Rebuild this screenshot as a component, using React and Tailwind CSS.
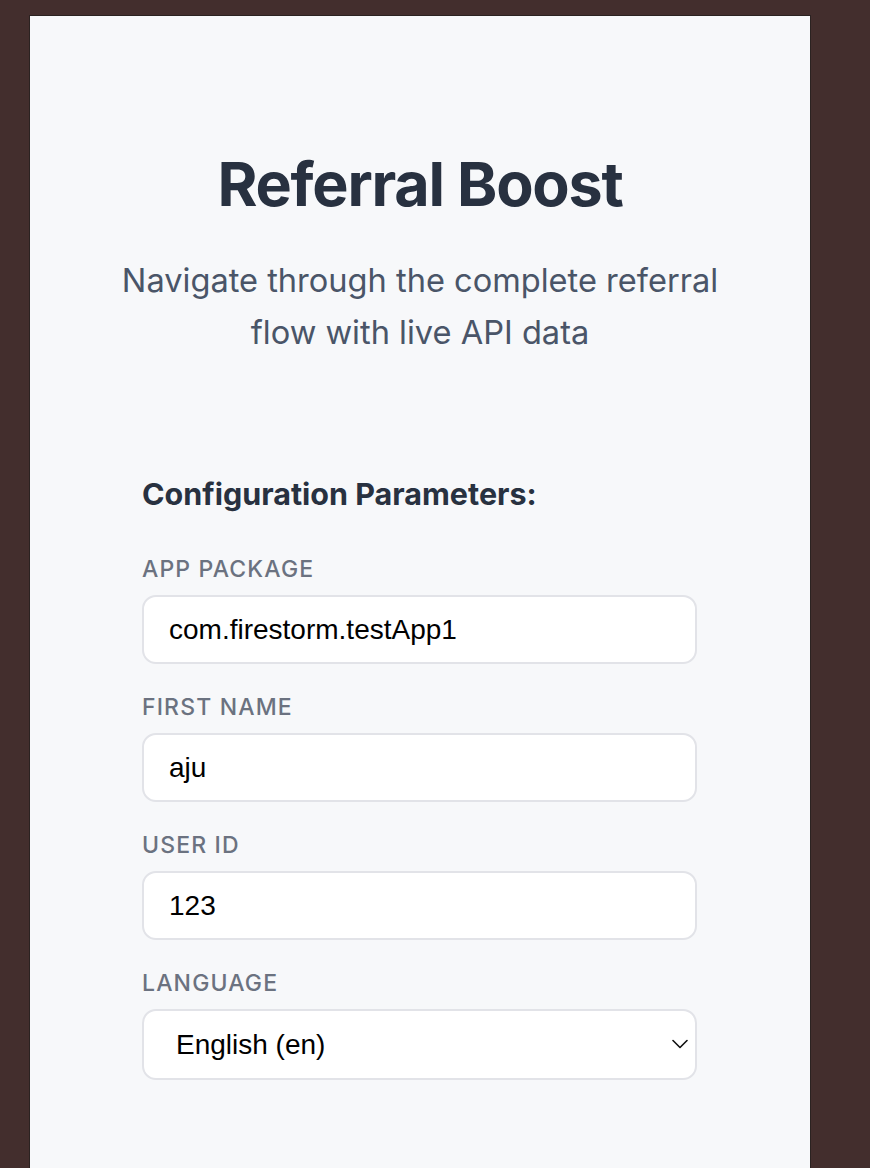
import React from 'react';

const fields = [
    { label: 'App Package', value: 'com.firestorm.testApp1' },
    { label: 'First Name', value: 'aju' },
    { label: 'User ID', value: '123' },
];

const Label = ({ children }) => (
    <label className="block text-[23px] leading-[28px] font-medium uppercase tracking-[0.05em] text-[#6b7280] mb-[12px]">{children}</label>
);

export default function App() {
    return (
        <div className="h-[1168px] overflow-hidden bg-[#432e2d] pt-[15px] pl-[29px]" style={{ fontFamily: 'Inter, sans-serif' }}>
            <div className="w-[782px] h-[1200px] bg-[#f7f8fa] border border-[#2b2221]">
                <div className="pt-[128px] text-center">
                    <h1 className="text-[61px] leading-[80px] font-bold tracking-[-0.02em] text-[#283140]">Referral Boost</h1>
                    <p className="mt-[30px] mx-auto w-[640px] text-[32.6px] leading-[52px] text-[#4a5568]">
                        Navigate through the complete referral flow with live API data
                    </p>
                </div>
                <div className="mt-[118px] ml-[112px] w-[555px]">
                    <h2 className="text-[30.5px] leading-[36px] font-bold text-[#283140] mb-[43px]">Configuration Parameters:</h2>
                    <div className="flex flex-col gap-[29px]">
                        {fields.map(f => (
                            <div key={f.label}>
                                <Label>{f.label}</Label>
                                <input
                                    type="text"
                                    defaultValue={f.value}
                                    className="w-full h-[69px] bg-white border-2 border-[#e2e3e8] rounded-[14px] px-[25px] text-[28px] text-black outline-none"
                                    style={{ fontFamily: '"Liberation Sans", Arial, sans-serif' }}
                                />
                            </div>
                        ))}
                        <div>
                            <Label>Language</Label>
                            <div className="relative">
                                <select
                                    defaultValue="en"
                                    className="w-full h-[71px] bg-white border-2 border-[#e2e3e8] rounded-[14px] pl-[32px] pr-[50px] text-[28px] text-black appearance-none outline-none"
                                    style={{ fontFamily: '"Liberation Sans", Arial, sans-serif' }}
                                >
                                    <option value="en">English (en)</option>
                                </select>
                                <svg className="absolute right-[9px] top-[30px] pointer-events-none" width="16" height="10" viewBox="0 0 16 10" fill="none">
                                    <path d="M1 1.5L8 8.5L15 1.5" stroke="#111" strokeWidth="1.6" strokeLinecap="round" strokeLinejoin="round" />
                                </svg>
                            </div>
                        </div>
                    </div>
                </div>
            </div>
        </div>
    );
}
